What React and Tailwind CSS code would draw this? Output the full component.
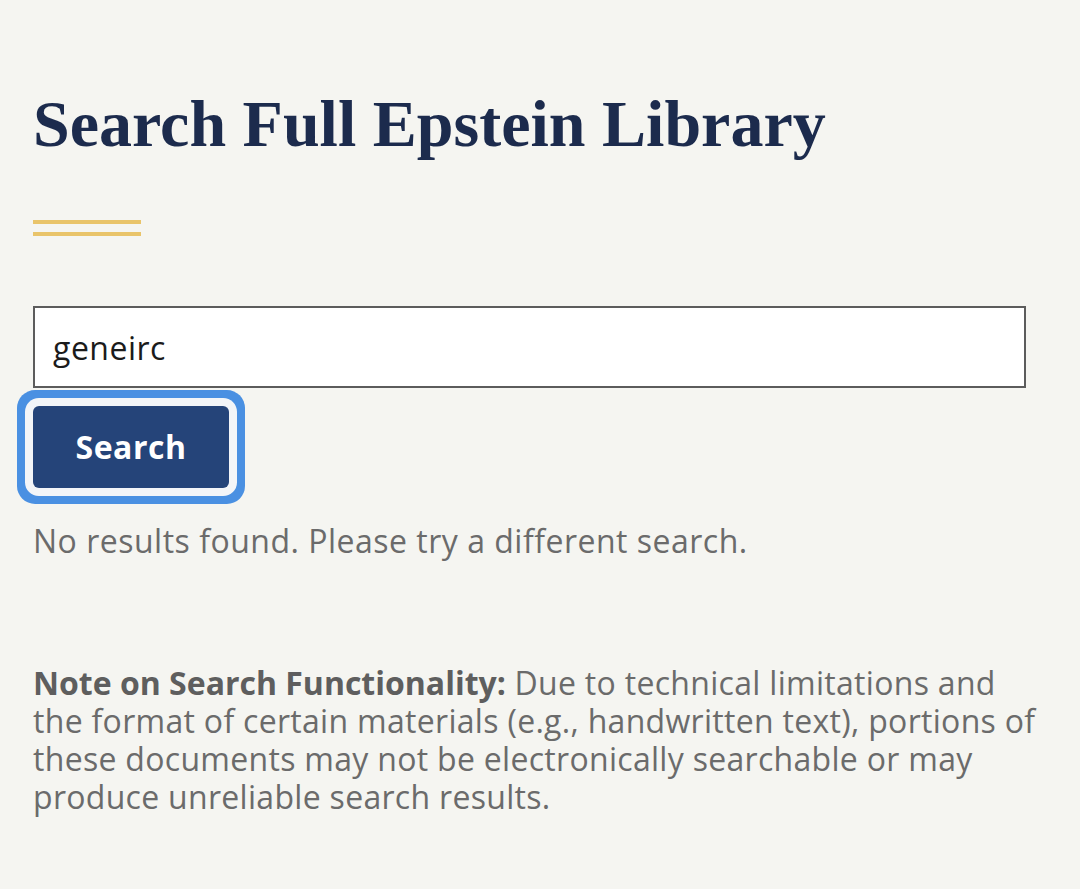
import React, { useState } from 'react';

const App = () => {
    const [query, setQuery] = useState('geneirc');

    return (
        <div className="min-h-[889px] bg-[#f5f5f1] px-[33px] pt-[88px] font-['Open_Sans',sans-serif]">
            <h1 className="font-['Liberation_Serif',serif] text-[66px] leading-[72px] font-bold text-[#1c2b4d]">
                Search Full Epstein Library
            </h1>

            <div className="mt-[60px] flex w-[108px] flex-col gap-[8px]">
                <div className="h-[4px] bg-[#e9c46a]" />
                <div className="h-[4px] bg-[#e9c46a]" />
            </div>

            <form className="mt-[70px]" onSubmit={(e) => e.preventDefault()}>
                <input
                    type="text"
                    value={query}
                    onChange={(e) => setQuery(e.target.value)}
                    className="block h-[82px] w-[993px] border-2 border-[#5c5c5c] bg-white px-[18px] text-[32px] tracking-[0.5px] text-[#1b1b1b] outline-none"
                />
                <button
                    type="submit"
                    className="mt-[18px] block h-[82px] w-[196px] rounded-[6px] bg-[#254479] text-[32px] font-bold tracking-[0.5px] text-white shadow-[0_0_0_8px_#f3f5f8,0_0_0_16px_#4a90e2]"
                >
                    Search
                </button>
            </form>

            <p className="mt-[34px] text-[32px] leading-[38px] tracking-[0.5px] text-[#6b6b6b]">
                No results found. Please try a different search.
            </p>

            <p className="mt-[104px] w-[1008px] text-[32px] leading-[38px] tracking-[0.3px] text-[#6b6b6b]">
                <strong className="font-bold tracking-normal text-[#5e5e5e]">Note on Search Functionality:</strong> Due to technical limitations and the format of certain materials (e.g., handwritten text), portions of these documents may not be electronically searchable or may produce unreliable search results.
            </p>
        </div>
    );
};

export default App;
